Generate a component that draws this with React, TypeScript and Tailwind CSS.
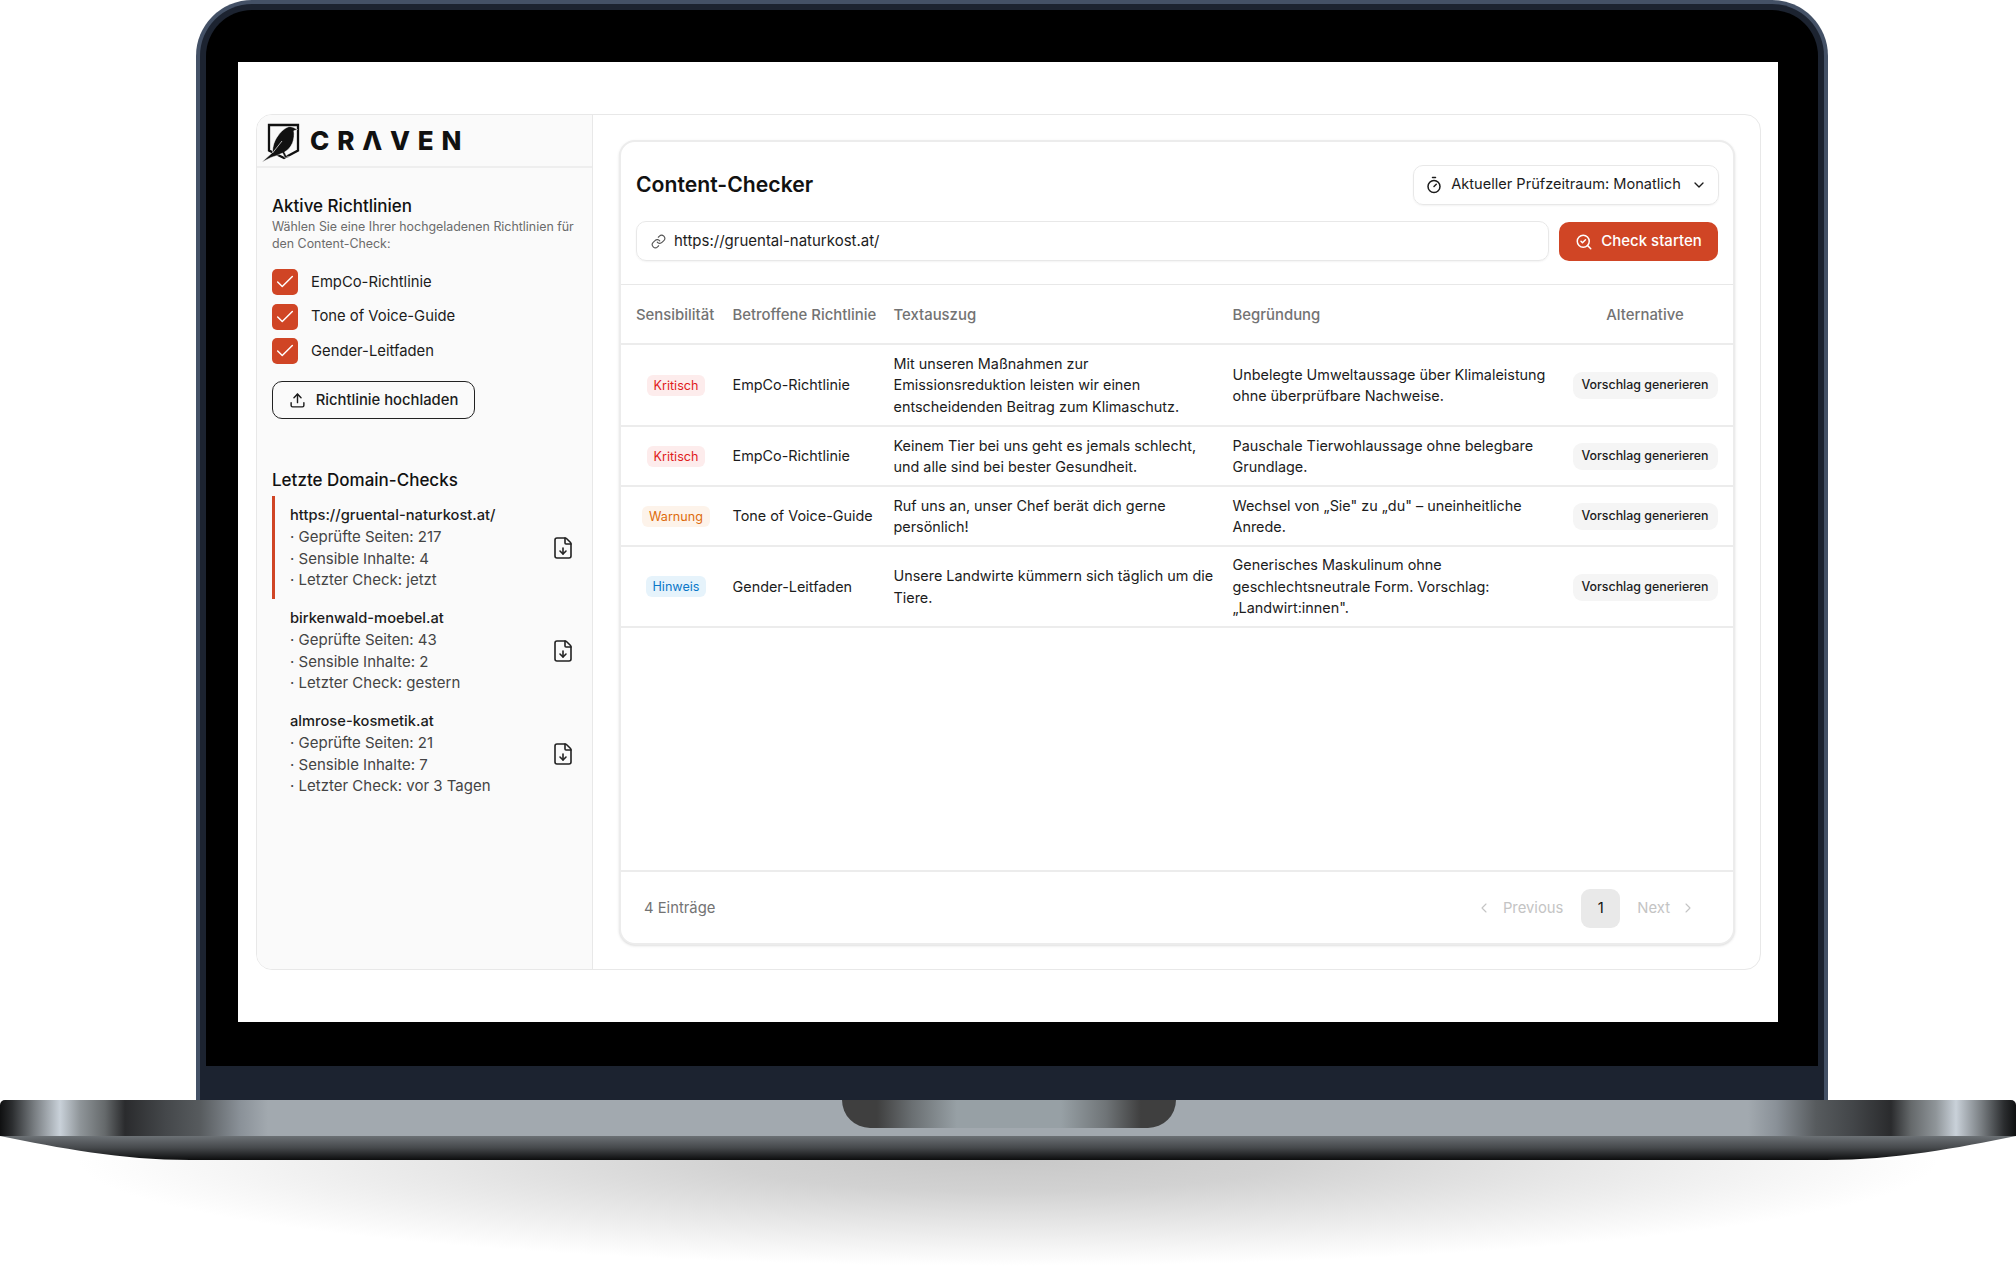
import { Check, ChevronDown, ChevronLeft, ChevronRight, FileDown, Link, SearchCheck, Timer, Upload } from "lucide-react";

const policies = ["EmpCo-Richtlinie", "Tone of Voice-Guide", "Gender-Leitfaden"];

const domains = [
  { url: "https://gruental-naturkost.at/", pages: 217, sensitive: 4, last: "jetzt", active: true },
  { url: "birkenwald-moebel.at", pages: 43, sensitive: 2, last: "gestern", active: false },
  { url: "almrose-kosmetik.at", pages: 21, sensitive: 7, last: "vor 3 Tagen", active: false },
];

const badgeCls = {
  Kritisch: "bg-[#fdecec] text-[#e01b1b]",
  Warnung: "bg-[#fdf3ea] text-[#dd6b0c]",
  Hinweis: "bg-[#e6f3fb] text-[#0b78c9]",
};

const rows: { level: keyof typeof badgeCls; policy: string; excerpt: string[]; reason: string[]; h: string }[] = [
  {
    level: "Kritisch",
    policy: "EmpCo-Richtlinie",
    excerpt: ["Mit unseren Maßnahmen zur", "Emissionsreduktion leisten wir einen", "entscheidenden Beitrag zum Klimaschutz."],
    reason: ["Unbelegte Umweltaussage über Klimaleistung", "ohne überprüfbare Nachweise."],
    h: "h-[82px]",
  },
  {
    level: "Kritisch",
    policy: "EmpCo-Richtlinie",
    excerpt: ["Keinem Tier bei uns geht es jemals schlecht,", "und alle sind bei bester Gesundheit."],
    reason: ["Pauschale Tierwohlaussage ohne belegbare", "Grundlage."],
    h: "h-[60px]",
  },
  {
    level: "Warnung",
    policy: "Tone of Voice-Guide",
    excerpt: ["Ruf uns an, unser Chef berät dich gerne", "persönlich!"],
    reason: ["Wechsel von „Sie\" zu „du\" – uneinheitliche", "Anrede."],
    h: "h-[60px]",
  },
  {
    level: "Hinweis",
    policy: "Gender-Leitfaden",
    excerpt: ["Unsere Landwirte kümmern sich täglich um die", "Tiere."],
    reason: ["Generisches Maskulinum ohne", "geschlechtsneutrale Form. Vorschlag:", "„Landwirt:innen\"."],
    h: "h-[81px]",
  },
];

const gridCols = "grid grid-cols-[96.5px_161px_339px_340px_145px]";

function Lines({ items }: { items: string[] }) {
  return (
    <div className="text-[14.4px] leading-[21.4px] text-[#1c1c1c] whitespace-nowrap">
      {items.map((l) => (
        <div key={l}>{l}</div>
      ))}
    </div>
  );
}

function Logo() {
  return (
    <div className="flex items-center h-[51px] pl-[3px]">
      <svg width="48" height="44" viewBox="0 0 48 44" className="shrink-0">
        <path d="M9 6h29v25.500L24 39 9 31.500z" fill="none" stroke="#111" strokeWidth="2.300" />
        <path
          d="M2 43 12.500 33.500C12.500 27 14.500 21 18.500 16 22 11.500 26 8 30 7.500L33 8.300 37.500 10.500 33.800 11.800C34.500 16 34 20 32.500 24 30.500 28.500 27.500 31.500 24.500 33L26.500 37 29.500 38 25 39 22.500 34 17 36.500 11 38.500Z"
          fill="#111"
          stroke="#fafafa"
          strokeWidth="0.5"
          strokeLinejoin="round"
        />
        <path d="M12.500 34 22 22" stroke="#fafafa" strokeWidth="0.7" fill="none" />
      </svg>
      <span className="ml-[2px] text-[26px] leading-none font-extrabold tracking-[0.3em] text-[#111]">CRΛVEN</span>
    </div>
  );
}

function Sidebar() {
  return (
    <aside className="w-[336px] shrink-0 bg-[#fafafa] border-r border-[#e8e8e8]">
      <div className="border-b-2 border-[#eeeeee]">
        <Logo />
      </div>
      <div className="pl-[15px] pr-[17px]">
        <h2 className="mt-[28px] text-[17px] leading-[20px] font-medium text-[#111]">Aktive Richtlinien</h2>
        <p className="mt-[2px] text-[12.4px] leading-[17px] text-[#6b6b6b] whitespace-nowrap">
          Wählen Sie eine Ihrer hochgeladenen Richtlinien für
          <br />
          den Content-Check:
        </p>
        <ul className="mt-[17px] flex flex-col gap-[8.5px]">
          {policies.map((p) => (
            <li key={p} className="flex items-center gap-[13px] h-[26px]">
              <span className="w-[26px] h-[26px] rounded-[5px] bg-[#d04525] flex items-center justify-center">
                <Check size={22} strokeWidth={1.6} className="text-white" />
              </span>
              <span className="text-[14.8px] text-[#1c1c1c]">{p}</span>
            </li>
          ))}
        </ul>
        <button className="mt-[17px] h-[38px] w-[203px] rounded-[10px] border border-[#222] flex items-center justify-center gap-[10px] text-[14.8px] font-medium text-[#1c1c1c]">
          <Upload size={17} strokeWidth={2} />
          Richtlinie hochladen
        </button>
        <h2 className="mt-[51px] text-[17px] leading-[20px] font-medium text-[#111]">Letzte Domain-Checks</h2>
        <div className="mt-[6px]">
          {domains.map((d) => (
            <div
              key={d.url}
              className={`h-[103px] flex items-center justify-between pl-[15px] border-l-[3px] ${d.active ? "border-[#d04525]" : "border-transparent"}`}
            >
              <div className="text-[15px] leading-[21.5px] text-[#444] whitespace-nowrap">
                <div className="text-[14.7px] font-medium text-[#1c1c1c]">{d.url}</div>
                <div>· Geprüfte Seiten: {d.pages}</div>
                <div>· Sensible Inhalte: {d.sensitive}</div>
                <div>· Letzter Check: {d.last}</div>
              </div>
              <FileDown size={24} strokeWidth={1.6} className="text-[#222]" />
            </div>
          ))}
        </div>
      </div>
    </aside>
  );
}

function Main() {
  return (
    <main className="flex-1 pl-[26px] pr-[25px] pt-[25px]">
      <div className="h-[805px] rounded-[16px] border-2 border-[#ececec] bg-white flex flex-col shadow-sm">
        <div className="px-[15px] pt-[23px] pb-[23px] border-b border-[#e8e8e8]">
          <div className="flex items-center justify-between">
            <h1 className="text-[21.2px] font-semibold text-[#111]">Content-Checker</h1>
            <button className="-mr-[1px] h-[40px] w-[306px] rounded-[10px] border border-[#e8e8e8] shadow-xs flex items-center justify-center gap-[8px] text-[14.6px] text-[#1c1c1c]">
              <Timer size={18} strokeWidth={2} />
              Aktueller Prüfzeitraum: Monatlich
              <ChevronDown size={16} strokeWidth={2} className="ml-[2px]" />
            </button>
          </div>
          <div className="mt-[16px] flex gap-[10px]">
            <div className="flex-1 h-[40px] rounded-[10px] border border-[#e8e8e8] shadow-xs flex items-center gap-[8px] pl-[14px] text-[15px] text-[#1c1c1c]">
              <Link size={15} strokeWidth={1.8} className="text-[#555]" />
              https://gruental-naturkost.at/
            </div>
            <button className="mt-[1px] w-[159px] h-[39px] rounded-[10px] bg-[#d04525] flex items-center justify-center gap-[8px] text-[15px] font-medium text-white">
              <SearchCheck size={18} strokeWidth={2} />
              Check starten
            </button>
          </div>
        </div>

        <div className="flex-1">
          <div className={`${gridCols} h-[60px] items-center pt-[3px] pl-[15px] border-b-2 border-[#ececec] text-[14.9px] font-medium text-[#737373]`}>
            <span>Sensibilität</span>
            <span>Betroffene Richtlinie</span>
            <span>Textauszug</span>
            <span>Begründung</span>
            <span className="text-center">Alternative</span>
          </div>
          {rows.map((r, i) => (
            <div key={i} className={`${gridCols} ${r.h} items-center pl-[15px] border-b-2 border-[#ececec]`}>
              <div className="w-[80px] flex justify-center">
                <span className={`px-[7px] h-[21px] leading-[21px] rounded-[6px] text-[12.6px] ${badgeCls[r.level]}`}>{r.level}</span>
              </div>
              <div className="text-[14.4px] text-[#1c1c1c]">{r.policy}</div>
              <Lines items={r.excerpt} />
              <Lines items={r.reason} />
              <div className="flex justify-center">
                <span className="mt-[1px] h-[27px] w-[145px] rounded-[9px] bg-[#f5f5f5] flex items-center justify-center text-[12.4px] font-medium text-[#1c1c1c]">
                  Vorschlag generieren
                </span>
              </div>
            </div>
          ))}
        </div>

        <div className="h-[73px] pt-[1px] border-t-2 border-[#ececec] flex items-center justify-between pl-[23px] pr-[37px]">
          <span className="text-[14.8px] text-[#737373]">4 Einträge</span>
          <div className="flex items-center text-[14.8px] text-[#c4c4c4]">
            <ChevronLeft size={16} strokeWidth={1.6} />
            <span className="ml-[11px]">Previous</span>
            <span className="ml-[18px] w-[39px] h-[39px] rounded-[9px] bg-[#e9e9e9] flex items-center justify-center text-[#111]">1</span>
            <span className="ml-[17px]">Next</span>
            <ChevronRight size={16} strokeWidth={1.6} className="ml-[10px]" />
          </div>
        </div>
      </div>
    </main>
  );
}

function Base() {
  return (
    <div>
      <div className="h-[36px] rounded-t-[5px] bg-[linear-gradient(90deg,#0f1011_0px,#2b2d2f_12px,#777c80_34px,#c9d1d9_60px,#8f9599_80px,#65696b_105px,#2a2b2d_125px,#44474a_165px,#575b5e_200px,#8a9198_240px,#a2a9af_268px,#a2a9af_1748px,#8a9198_1776px,#575b5e_1816px,#44474a_1851px,#2a2b2d_1891px,#65696b_1911px,#8f9599_1936px,#c9d1d9_1956px,#777c80_1982px,#2b2d2f_2004px,#0f1011_2016px)]">
        <div className="ml-[842px] w-[334px] h-[28px] rounded-b-[28px] bg-[linear-gradient(90deg,#3f3f3f_0px,#3f3f3f_35px,#6a6f72_70px,#97a0a5_115px,#97a0a5_219px,#6f7477_264px,#3f3f3f_299px,#3f3f3f_334px)]" />
      </div>
      <svg width="2016" height="24" viewBox="0 0 2016 24" className="block">
        <defs>
          <linearGradient id="baseEdge" x1="0" y1="0" x2="0" y2="1">
            <stop offset="0" stopColor="#6c7175" />
            <stop offset="0.5" stopColor="#45484b" />
            <stop offset="1" stopColor="#0c0d0e" />
          </linearGradient>
        </defs>
        <path d="M0 0H2016C1956 12 1896 24 1826 24H190C120 24 60 12 0 0Z" fill="url(#baseEdge)" />
      </svg>
    </div>
  );
}

export default function App() {
  return (
    <div className="w-[2016px] h-[1270px] bg-white overflow-hidden font-[Inter,sans-serif]">
      <div className="ml-[196px] w-[1632px] h-[1100px] rounded-t-[56px] bg-[#445166] px-[4px] pt-[4px]">
        <div className="h-full rounded-t-[52px] bg-[#1c2330] pl-[6px] pr-[6px] pt-[6px]">
          <div className="h-[1056px] rounded-t-[46px] bg-black pl-[32px] pr-[40px] pt-[52px] pb-[44px]">
            <div className="h-full bg-white pl-[18px] pr-[17px] pt-[52px]">
              <div className="h-[856px] flex rounded-[16px] border border-[#e8e8e8] overflow-hidden">
                <Sidebar />
                <Main />
              </div>
            </div>
          </div>
        </div>
      </div>
      <Base />
      <div className="h-[110px] bg-[radial-gradient(ellipse_930px_106px_at_50%_0,#c8c8c8_0%,#d2d2d2_30%,#e6e6e6_60%,#f6f6f6_85%,#ffffff_100%)]" />
    </div>
  );
}
